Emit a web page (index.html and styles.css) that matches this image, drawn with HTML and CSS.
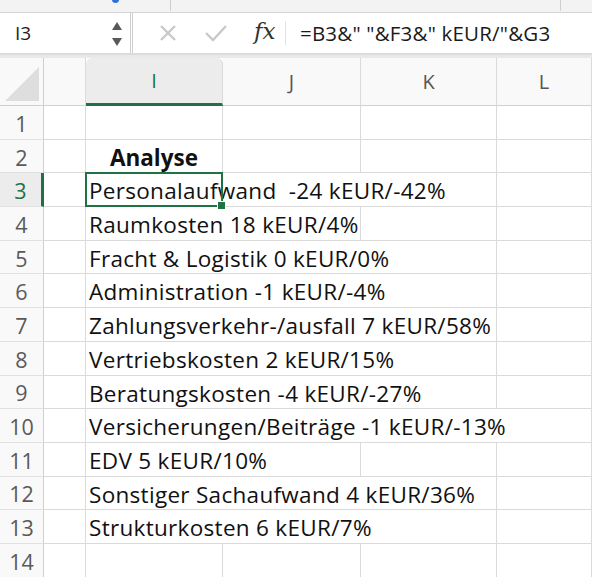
FILE: index.html
```html
<!DOCTYPE html>
<html>
<head>
    <title>Analyse</title>
    <link rel="stylesheet" href="styles.css">
</head>
<body>

<div class="ribbon-edge">
    <span class="ribbon-dot"></span>
    <span class="ribbon-sep sep-a"></span>
    <span class="ribbon-sep sep-b"></span>
</div>

<div class="formula-bar">
    <div class="name-box">
        <span class="cell-ref">I3</span>
        <span class="spinner">
            <svg width="12" height="26" viewBox="0 0 12 26">
                <path d="M1 9 L6 1 L11 9 Z" fill="#595959"/>
                <path d="M1 17 L11 17 L6 25 Z" fill="#595959"/>
            </svg>
        </span>
    </div>
    <div class="fb-buttons">
        <svg class="fb-icon" width="18" height="18" viewBox="0 0 18 18">
            <path d="M2 2 L16 16 M16 2 L2 16" stroke="#c9c9c9" stroke-width="2.4" fill="none"/>
        </svg>
        <svg class="fb-icon" width="24" height="18" viewBox="0 0 24 18">
            <path d="M2 9 L9 16 L22 2" stroke="#c9c9c9" stroke-width="2.4" fill="none"/>
        </svg>
        <span class="fx">fx</span>
    </div>
    <div class="formula">=B3&amp;" "&amp;F3&amp;" kEUR/"&amp;G3</div>
</div>

<div class="sheet">
    <!-- column headers -->
    <div class="hd corner"><span class="corner-tri"></span></div>
    <div class="hd col-hd"></div>
    <div class="hd col-hd active">I</div>
    <div class="hd col-hd">J</div>
    <div class="hd col-hd">K</div>
    <div class="hd col-hd">L</div>

    <div class="rn">1</div><div class="c"></div><div class="c"></div><div class="c"></div><div class="c"></div><div class="c"></div>

    <div class="rn">2</div><div class="c"></div><div class="c title">Analyse</div><div class="c"></div><div class="c"></div><div class="c"></div>

    <div class="rn active">3</div><div class="c"></div>
    <div class="c txt span-3">Personalaufwand&nbsp; -24 kEUR/-42%<span class="selection"><span class="handle"></span></span></div>
    <div class="c"></div>

    <div class="rn">4</div><div class="c"></div>
    <div class="c txt span-2">Raumkosten 18 kEUR/4%</div>
    <div class="c"></div><div class="c"></div>

    <div class="rn">5</div><div class="c"></div>
    <div class="c txt span-3">Fracht &amp; Logistik 0 kEUR/0%</div>
    <div class="c"></div>

    <div class="rn">6</div><div class="c"></div>
    <div class="c txt span-3">Administration -1 kEUR/-4%</div>
    <div class="c"></div>

    <div class="rn">7</div><div class="c"></div>
    <div class="c txt span-3">Zahlungsverkehr-/ausfall 7 kEUR/58%</div>
    <div class="c"></div>

    <div class="rn">8</div><div class="c"></div>
    <div class="c txt span-3">Vertriebskosten 2 kEUR/15%</div>
    <div class="c"></div>

    <div class="rn">9</div><div class="c"></div>
    <div class="c txt span-3">Beratungskosten -4 kEUR/-27%</div>
    <div class="c"></div>

    <div class="rn">10</div><div class="c"></div>
    <div class="c txt span-4">Versicherungen/Beiträge -1 kEUR/-13%</div>

    <div class="rn">11</div><div class="c"></div>
    <div class="c txt span-2">EDV 5 kEUR/10%</div>
    <div class="c"></div><div class="c"></div>

    <div class="rn">12</div><div class="c"></div>
    <div class="c txt span-3">Sonstiger Sachaufwand 4 kEUR/36%</div>
    <div class="c"></div>

    <div class="rn">13</div><div class="c"></div>
    <div class="c txt span-3">Strukturkosten 6 kEUR/7%</div>
    <div class="c"></div>

    <div class="rn">14</div><div class="c"></div><div class="c"></div><div class="c"></div><div class="c"></div><div class="c"></div>
</div>

</body>
</html>
```
FILE: styles.css
```css
body {
    margin: 0;
    padding: 0;
    width: 592px;
    height: 577px;
    overflow: hidden;
    background-color: #fff;
    font-family: "Open Sans", "Liberation Sans", sans-serif;
    color: #111;
}

/* strip left of the ribbon */
.ribbon-edge {
    position: relative;
    height: 12px;
    background-color: #f3f3f3;
    border-bottom: 1px solid #d4d4d4;
}

.ribbon-dot {
    position: absolute;
    left: 112px;
    top: -4px;
    width: 7px;
    height: 7px;
    border-radius: 50%;
    background-color: #2f6fd6;
}

.ribbon-sep {
    position: absolute;
    top: 0;
    width: 1px;
    height: 11px;
    background-color: #cfcfcf;
}

.sep-a { left: 170px; }
.sep-b { left: 560px; }

/* formula bar */
.formula-bar {
    display: flex;
    height: 40px;
    border-bottom: 2px solid #dcdcdc;
    background-color: #fff;
}

.name-box {
    display: flex;
    align-items: center;
    width: 133px;
    padding-left: 15px;
    box-sizing: border-box;
    border-right: 3px double #cfcfcf;
}

.cell-ref {
    flex: 1;
    font-size: 19px;
    color: #222;
}

.spinner {
    display: flex;
    margin-right: 7px;
    margin-top: 2px;
}

.fb-buttons {
    display: flex;
    align-items: center;
    width: 153px;
    padding-left: 26px;
    box-sizing: border-box;
    border-right: 1px solid #e2e2e2;
    margin: 8px 0;
}

.fb-icon {
    margin-right: 27px;
}

.fb-icon + .fb-icon {
    margin-right: 26px;
}

.fx {
    font-family: "DejaVu Serif", "Liberation Serif", serif;
    font-style: italic;
    font-size: 23px;
    color: #333;
    margin-top: -4px;
}

.formula {
    display: flex;
    align-items: center;
    padding-left: 14px;
    font-size: 20.5px;
    letter-spacing: 0.2px;
    color: #1a1a1a;
    white-space: nowrap;
}

/* grid */
.sheet {
    display: grid;
    grid-template-columns: 44px 42px 137px 138px 136px 95px;
    grid-template-rows: 48px;
    grid-auto-rows: 33.7px;
    border-top: 3px solid #e9e9e9;
}

.hd {
    background-color: #f9f9f9;
    border-right: 1px solid #dadada;
    border-bottom: 1px solid #d0d0d0;
    box-sizing: border-box;
    display: flex;
    align-items: center;
    justify-content: center;
    font-size: 20px;
    color: #555;
}

.corner {
    position: relative;
    border-right: 1px solid #cfcfcf;
}

.corner-tri {
    position: absolute;
    right: 4px;
    bottom: 4px;
    width: 0;
    height: 0;
    border-left: 34px solid transparent;
    border-bottom: 34px solid #dedede;
}

.col-hd.active {
    background-color: #ececec;
    border-bottom: 3px solid #1f7244;
    border-radius: 6px 6px 0 0;
    color: #1f7244;
}

.rn {
    background-color: #f9f9f9;
    border-right: 1px solid #cfcfcf;
    border-bottom: 1px solid #e0e0e0;
    box-sizing: border-box;
    display: flex;
    align-items: center;
    justify-content: center;
    font-size: 21.5px;
    color: #5a5a5a;
    padding-top: 2px;
}

.rn.active {
    background-color: #ececec;
    border-right: 3px solid #1f7244;
    color: #1f7244;
}

.c {
    border-right: 1px solid #dadada;
    border-bottom: 1px solid #dadada;
    box-sizing: border-box;
    font-size: 22.5px;
    letter-spacing: 0.3px;
    line-height: 36px;
    white-space: nowrap;
    padding-left: 3px;
}

.title {
    text-align: center;
    font-weight: bold;
    letter-spacing: 0;
    padding-left: 0;
}

.txt {
    position: relative;
}

.span-2 { grid-column: span 2; }
.span-3 { grid-column: span 3; }
.span-4 { grid-column: span 4; }

/* active cell I3 */
.selection {
    position: absolute;
    left: -1px;
    top: -1px;
    width: 138px;
    height: 35px;
    box-sizing: border-box;
    border: 2px solid #1f7244;
}

.handle {
    position: absolute;
    right: -5px;
    bottom: -5px;
    width: 7px;
    height: 7px;
    background-color: #1f7244;
    border: 1px solid #fff;
}
```
